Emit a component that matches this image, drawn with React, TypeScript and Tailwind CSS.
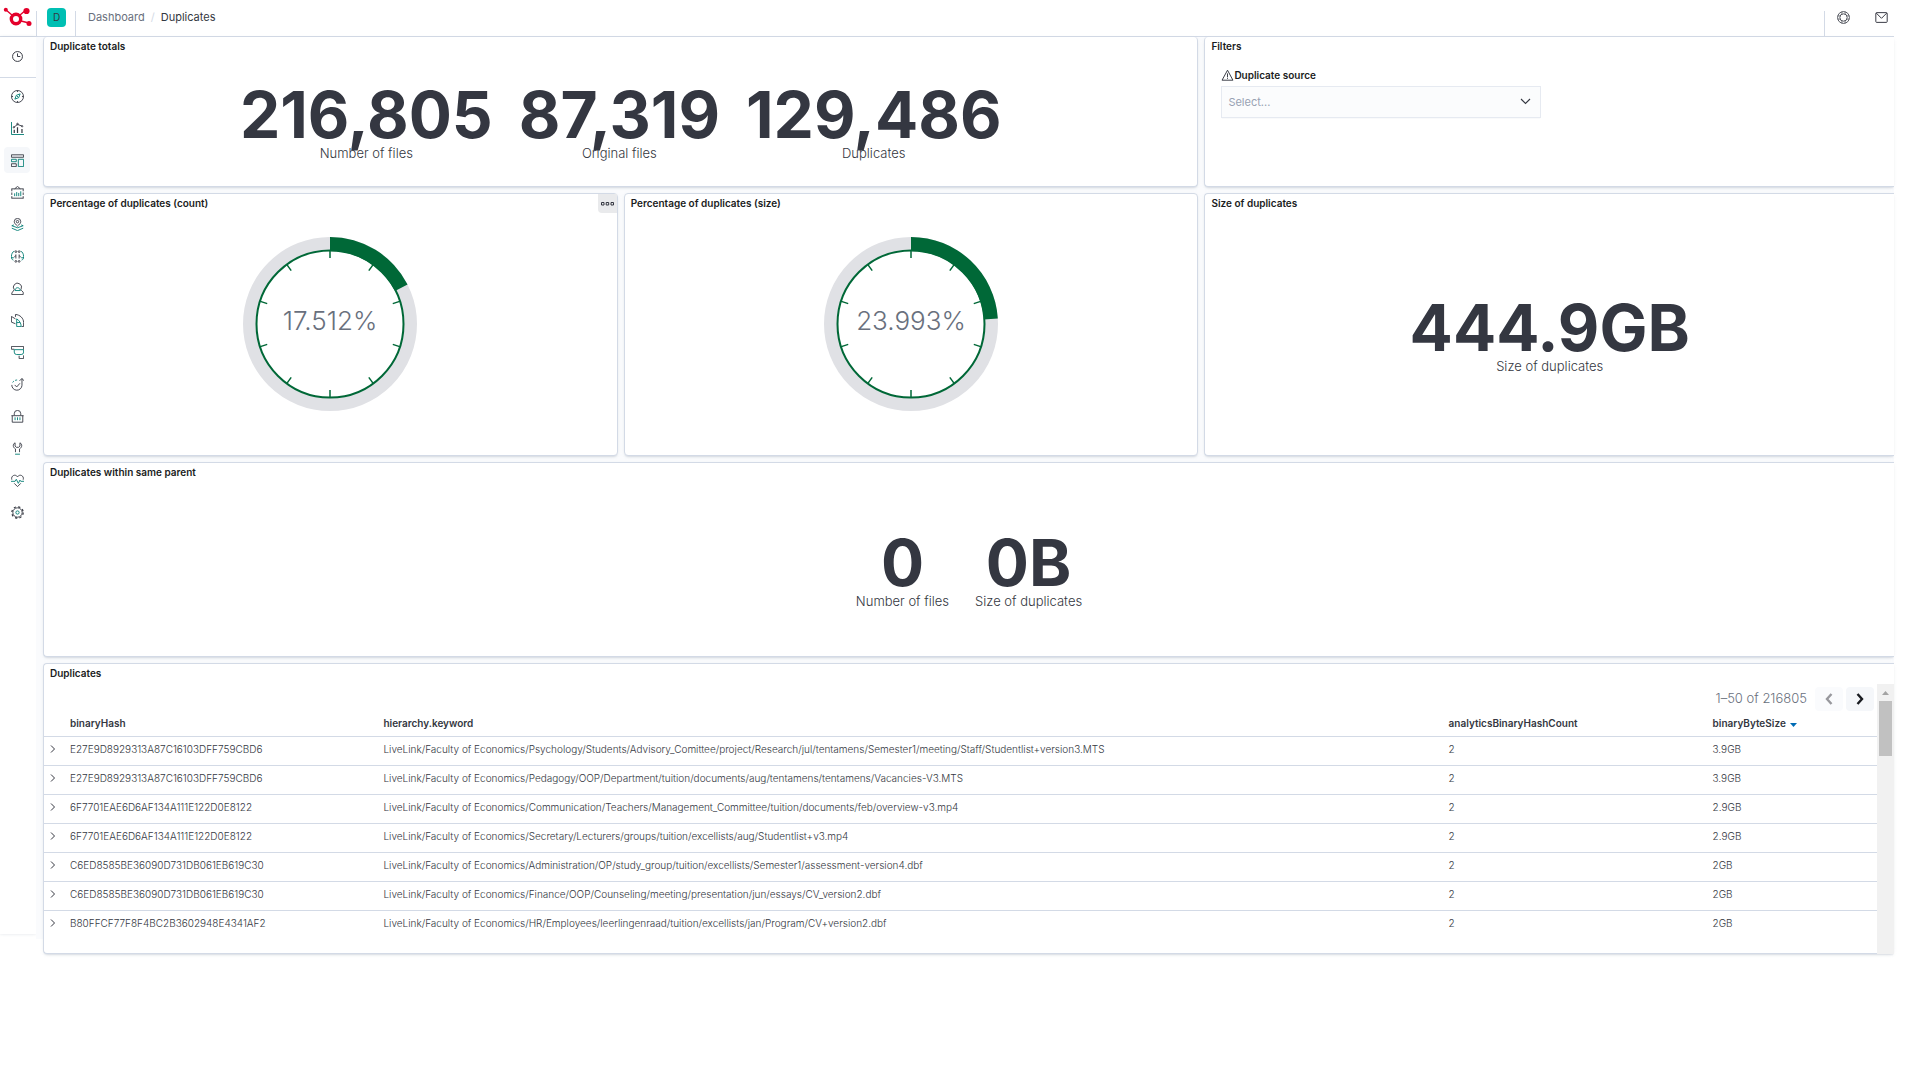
import { useState } from 'react';

const INK = '#343741';
const TEAL = '#017d73';

const navItems = [
  'Discover', 'Visualize', 'Dashboards', 'Canvas', 'Maps', 'Machine Learning', 'Infrastructure',
  'Logs', 'APM', 'Uptime', 'SIEM', 'Dev Tools', 'Stack Monitoring', 'Management',
];

const rows = [
  { hash: 'E27E9D8929313A87C16103DFF759CBD6', path: 'LiveLink/Faculty of Economics/Psychology/Students/Advisory_Comittee/project/Research/jul/tentamens/Semester1/meeting/Staff/Studentlist+version3.MTS', count: 2, size: '3.9GB' },
  { hash: 'E27E9D8929313A87C16103DFF759CBD6', path: 'LiveLink/Faculty of Economics/Pedagogy/OOP/Department/tuition/documents/aug/tentamens/tentamens/Vacancies-V3.MTS', count: 2, size: '3.9GB' },
  { hash: '6F7701EAE6D6AF134A111E122D0E8122', path: 'LiveLink/Faculty of Economics/Communication/Teachers/Management_Committee/tuition/documents/feb/overview-v3.mp4', count: 2, size: '2.9GB' },
  { hash: '6F7701EAE6D6AF134A111E122D0E8122', path: 'LiveLink/Faculty of Economics/Secretary/Lecturers/groups/tuition/excellists/aug/Studentlist+v3.mp4', count: 2, size: '2.9GB' },
  { hash: 'C6ED8585BE36090D731DB061EB619C30', path: 'LiveLink/Faculty of Economics/Administration/OP/study_group/tuition/excellists/Semester1/assessment-version4.dbf', count: 2, size: '2GB' },
  { hash: 'C6ED8585BE36090D731DB061EB619C30', path: 'LiveLink/Faculty of Economics/Finance/OOP/Counseling/meeting/presentation/jun/essays/CV_version2.dbf', count: 2, size: '2GB' },
  { hash: 'B80FFCF77F8F4BC2B3602948E4341AF2', path: 'LiveLink/Faculty of Economics/HR/Employees/leerlingenraad/tuition/excellists/jan/Program/CV+version2.dbf', count: 2, size: '2GB' },
];

const NavIcon = ({ name }: { name: string }) => (
  <svg width="13" height="13" viewBox="0 0 32 32" fill="none" stroke={INK} strokeWidth="2.2" aria-hidden="true">
    {name === 'Discover' && (
      <>
        <circle cx="16" cy="16" r="14.8" />
        <path d="M16 1v4M16 27v4M1 16h4M27 16h4" />
        <path d="M22.5 9.5l-3.6 9.4-9.4 3.6 3.6-9.4zM14 14l4 4" stroke={TEAL} />
      </>
    )}
    {name === 'Visualize' && (
      <>
        <path d="M1.2 0v30.8H32" stroke={TEAL} />
        <path d="M8 19v8M16 13v14M27 17v10" strokeWidth="3" />
        <path d="M7 13l9-7 11 4" />
        <circle cx="7" cy="13" r="1.6" />
        <circle cx="16" cy="5" r="2" />
        <circle cx="27.5" cy="10.5" r="1.6" />
      </>
    )}
    {name === 'Dashboards' && (
      <>
        <path d="M1 2h30v6H1zM1 24h12v7H1z" />
        <path d="M1 13h12v6H1zM18 13h13v18H18z" stroke={TEAL} />
      </>
    )}
    {name === 'Canvas' && (
      <>
        <path d="M9 7l7-6 7 6" />
        <path d="M1 7h30M1 30h30" />
        <path d="M2 7v23M30 7v23" strokeDasharray="6 3" />
        <path d="M9 18v7M14 15v10M19 17v8M24 13v12" stroke={TEAL} />
      </>
    )}
    {name === 'Maps' && (
      <>
        <path d="M16 20c-4-4-8-7-8-11a8 8 0 0116 0c0 4-4 7-8 11z" />
        <circle cx="16" cy="9" r="3" />
        <path d="M7 17l-5 2 14 5 14-5-5-2M2 25l14 6 14-6" stroke={TEAL} />
      </>
    )}
    {name === 'Machine Learning' && (
      <>
        <path d="M8 3C4 4 1 10 1 16s2 8 5 9M24 3c4 1 7 7 7 13s-2 8-5 9M1 19h6M25 19h6" stroke={TEAL} />
        <path d="M12 11v10M20 11v10M12 14l-4 3M20 14l4 3" />
        <circle cx="12" cy="4" r="2.2" />
        <circle cx="20" cy="4" r="2.2" />
        <circle cx="12" cy="28" r="2.2" />
        <circle cx="20" cy="28" r="2.2" />
      </>
    )}
    {name === 'Infrastructure' && (
      <>
        <path d="M8 19a10 10 0 1117-2c-1 2-1 3 1 4l4 4v6H2v-4z" />
        <path d="M10 21c1-5 3-7 6-7s6 2 7 7z" stroke={TEAL} />
      </>
    )}
    {name === 'Logs' && (
      <>
        <path d="M11 24L1 20V6l10 6M11 7V1c11 1 20 9 20 20v10h-5" />
        <path d="M14 12c7 4 11 11 11 19H14zM14 21h8" stroke={TEAL} />
      </>
    )}
    {name === 'APM' && (
      <>
        <path d="M8 8H1V1h30v8M20 24v7h11v-8" />
        <path d="M8 9h23v6a6 6 0 01-6 6H14a6 6 0 01-6-6z" stroke={TEAL} />
      </>
    )}
    {name === 'Uptime' && (
      <>
        <path d="M4 11a13 13 0 0112-6" stroke={TEAL} strokeDasharray="5 3" />
        <path d="M2 17a12.500 12.500 0 0025 1V2M21 7l6-6 5 6" />
        <path d="M9 17l5 5 8-9" />
      </>
    )}
    {name === 'SIEM' && (
      <>
        <path d="M8 13V9a8 8 0 0116 0v4M1 14h30M3 14v16h26V14" />
        <path d="M10 18v7M16 18v7M22 18v7" stroke={TEAL} />
      </>
    )}
    {name === 'Dev Tools' && (
      <>
        <path d="M11 25V17C4 13 4 5 10 2v8l3 3h6l3-3V2c6 3 6 11-1 15v8" />
        <path d="M10 30h12" stroke={TEAL} />
      </>
    )}
    {name === 'Stack Monitoring' && (
      <>
        <path d="M2 14C-1 4 11-1 16 7c5-8 17-3 14 7M8 23l8 8 8-8" />
        <path d="M0 18h10l3-5 5 10 4-8 2 3h8" stroke={TEAL} />
      </>
    )}
    {name === 'Management' && (
      <>
        <circle cx="16" cy="16" r="11.500" />
        <circle cx="16" cy="16" r="14" strokeWidth="3" strokeDasharray="5.5 5.500" />
        <circle cx="16" cy="16" r="4" stroke={TEAL} />
      </>
    )}
  </svg>
);

const Logo = () => (
  <svg width="30" height="20" viewBox="0 0 30 20" fill="none" stroke="#e4002b" aria-hidden="true">
    <path d="M2.500 2.500l7 6M17 8l6-5M18 14l8 2" strokeWidth="1.400" />
    <circle cx="13" cy="12" r="4.700" strokeWidth="3.400" />
    <g fill="#e4002b" stroke="none">
      <circle cx="2.800" cy="2.700" r="2" />
      <circle cx="23.500" cy="4" r="3.100" />
      <circle cx="26" cy="16.500" r="2.500" />
    </g>
  </svg>
);

const Panel = ({
  title,
  className = '',
  children,
  menu = false,
}: {
  title: string;
  className?: string;
  children: React.ReactNode;
  menu?: boolean;
}) => (
  <section
    className={`flex flex-col min-w-0 bg-white border border-[#d3dae6] rounded shadow-[0_2px_2px_-1px_rgba(152,162,179,0.3),0_1px_5px_-2px_rgba(152,162,179,0.3)] ${className}`}
  >
    <div className="flex justify-between h-5">
      <h2 className="px-1.5 text-[10px] leading-[18px] font-semibold text-[#1a1c21]">{title}</h2>
      {menu && (
        <button type="button" aria-label="Panel options" className="w-[19px] h-[19px] flex items-center justify-center bg-[#e9eaec] rounded-bl">
          <svg width="13" height="4" viewBox="0 0 13 4" fill="none" stroke={INK} aria-hidden="true">
            <path d="M.5.5h2.500v2.500H.5zM5.200.5h2.500v2.500H5.200zM10 .5h2.500v2.500H10z" />
          </svg>
        </button>
      )}
    </div>
    {children}
  </section>
);

const Metrics = ({ items }: { items: { value: string; label: string }[] }) => (
  <div className="flex-1 flex items-center justify-center">
    {items.map(item => (
      <div key={item.label} className="px-[13px] pb-0.5 text-center">
        <div className="text-[64px] leading-[64px] font-bold text-[#343741]">{item.value}</div>
        <div className="text-[13px] leading-3 font-light text-[#343741]">{item.label}</div>
      </div>
    ))}
  </div>
);

const Gauge = ({ percent }: { percent: number }) => {
  const angle = (percent / 100) * 2 * Math.PI;
  const at = (r: number) => `${88 + r * Math.sin(angle)} ${88 - r * Math.cos(angle)}`;
  return (
    <div className="flex-1 flex items-center justify-center pb-[22px]">
      <svg width="176" height="176" viewBox="0 0 176 176" fill="none" role="img" aria-label={`${percent}%`}>
        <circle cx="88" cy="88" r="80.500" stroke="#e0e1e5" strokeWidth="13" />
        <circle cx="88" cy="88" r="73.500" stroke="#006837" strokeWidth="2" />
        {Array.from({ length: 10 }, (_, i) => (
          <path key={i} d="M88 14v8" stroke="#006837" strokeWidth="1.500" transform={`rotate(${i * 36} 88 88)`} />
        ))}
        <path d={`M88 1A87 87 0 0 1 ${at(87)}L${at(73)}A73 73 0 0 0 88 15Z`} fill="#006837" />
        <text x="88" y="94" textAnchor="middle" fill="#69707d" className="text-[26px] font-light">
          {percent}%
        </text>
      </svg>
    </div>
  );
};

const App = () => {
  const [source, setSource] = useState('');

  return (
    <div className="min-h-screen bg-white pr-[26px] font-['Inter',sans-serif] text-[#343741]">
      <header className="flex items-stretch h-[37px] border-b border-[#d3dae6]">
        <a href="#home" aria-label="Home" className="w-9 shrink-0 pl-[3px] pt-[7px]">
          <Logo />
        </a>
        <div className="w-10 mt-[11px] border-x border-[#d3dae6]">
          <button type="button" aria-label="Default space" className="-mt-[3px] ml-2.5 w-[19px] h-[19px] block rounded-sm bg-[#00bfb3] text-[10px] leading-[19px] text-center">
            D
          </button>
        </div>
        <nav aria-label="Breadcrumb" className="flex flex-1 items-center pl-3 pb-px text-[11px]">
          <a href="#dashboard" className="text-[#69707d]">Dashboard</a>
          <span className="px-1.5 text-[#d3dae6]">/</span>
          <span className="text-[#343741]">Duplicates</span>
        </nav>
        <div className="flex mt-[11px] border-l border-[#d3dae6] pl-3 pr-1.5 gap-[25px]">
          <button type="button" aria-label="Help" className="h-[13px]">
            <svg width="13" height="13" viewBox="0 0 16 16" fill="none" stroke={INK} aria-hidden="true">
              <circle cx="8" cy="8" r="7.300" />
              <circle cx="8" cy="8" r="4.500" />
              <path d="M6 1v3M10 1v3M6 12v3M10 12v3M1 6h3M1 10h3M12 6h3M12 10h3" strokeWidth=".8" />
            </svg>
          </button>
          <button type="button" aria-label="News" className="h-[13px]">
            <svg width="13" height="13" viewBox="0 0 16 16" fill="none" stroke={INK} strokeWidth="1.200" aria-hidden="true">
              <rect x="1" y="2" width="14" height="12" rx="1" />
              <path d="M1.500 2.500L8 9l6.500-6.500" />
            </svg>
          </button>
        </div>
      </header>

      <div className="flex items-start">
        <aside className="w-9 shrink-0 min-h-[897px] bg-white shadow-[0_0_3px_rgba(152,162,179,0.3)]">
          <div className="h-[41px] flex items-center justify-center pr-0.5 pb-px border-b border-[#d3dae6]">
            <button type="button" aria-label="Recently viewed">
              <svg width="11" height="11" viewBox="0 0 16 16" fill="none" stroke={INK} strokeWidth="1.400" className="block" aria-hidden="true">
                <circle cx="8" cy="8" r="7.200" />
                <path d="M8 3.500V8h4" />
              </svg>
            </button>
          </div>
          <nav aria-label="Main" className="flex flex-col gap-1.5 pt-[5px] pl-1">
            {navItems.map(name => (
              <a
                key={name}
                href="#app"
                aria-label={name}
                className={`w-[26px] h-[26px] flex items-center justify-center rounded ${name === 'Dashboards' ? 'bg-[#f5f7fa]' : ''}`}
              >
                <NavIcon name={name} />
              </a>
            ))}
          </nav>
        </aside>

        <main className="flex-1 min-w-0 pl-[7px] bg-[#fafbfd] grid grid-cols-[5fr_5fr_6fr] gap-1.5">
          <Panel title="Duplicate totals" className="col-span-2 min-h-[150px] border-t-0">
            <Metrics
              items={[
                { value: '216,805', label: 'Number of files' },
                { value: '87,319', label: 'Original files' },
                { value: '129,486', label: 'Duplicates' },
              ]}
            />
          </Panel>
          <Panel title="Filters" className="border-t-0 border-r-0 rounded-r-none">
            <div className="pl-4 pt-3">
              <label htmlFor="source" className="flex items-center text-[10px] leading-3 font-semibold text-[#1a1c21]">
                <svg width="13" height="12" viewBox="0 0 16 15" fill="none" stroke={INK} strokeWidth="1.200" aria-hidden="true">
                  <path d="M8 1.500L14.800 14H1.200zM8 5.500v5M8 11.500v1" />
                </svg>
                Duplicate source
              </label>
              <div className="relative mt-[5px] w-80">
                <select
                  id="source"
                  value={source}
                  onChange={e => setSource(e.target.value)}
                  className="appearance-none block w-full h-8 pl-1.5 border border-[#e6eaf1] bg-[#fbfcfd] text-[11px] text-[#98a2b3] shadow-[0_1px_1px_-1px_rgba(152,162,179,0.3)]"
                >
                  <option value="">Select...</option>
                </select>
                <svg width="11" height="7" viewBox="0 0 11 7" fill="none" stroke={INK} strokeWidth="1.100" className="absolute right-2.5 top-3 pointer-events-none" aria-hidden="true">
                  <path d="M1 1l4.500 4.500L10 1" />
                </svg>
              </div>
            </div>
          </Panel>

          <Panel title="Percentage of duplicates (count)" menu className="min-h-[263px]">
            <Gauge percent={17.512} />
          </Panel>
          <Panel title="Percentage of duplicates (size)">
            <Gauge percent={23.993} />
          </Panel>
          <Panel title="Size of duplicates" className="border-r-0 rounded-r-none">
            <Metrics items={[{ value: '444.9GB', label: 'Size of duplicates' }]} />
          </Panel>

          <Panel title="Duplicates within same parent" className="col-span-3 min-h-[195px] border-r-0 rounded-r-none">
            <Metrics
              items={[
                { value: '0', label: 'Number of files' },
                { value: '0B', label: 'Size of duplicates' },
              ]}
            />
          </Panel>

          <Panel title="Duplicates" className="col-span-3 min-h-[291px] -mb-[15px] border-r-0 rounded-r-none">
            <div className="flex-1 flex">
              <div className="flex-1 min-w-0">
                <div className="flex items-center justify-end gap-[3px] pt-[3px] pr-[3px] text-[13px] font-light text-[#69707d]">
                  <span className="pr-[5px]">1–50 of 216805</span>
                  <button type="button" disabled aria-label="Previous page" className="w-7 h-6 flex items-center justify-center rounded-sm bg-[#fafbfd]">
                    <svg width="8" height="12" viewBox="0 0 8 12" fill="none" stroke="#98989d" strokeWidth="2.400" aria-hidden="true">
                      <path d="M6.500 1L2 6l4.500 5" />
                    </svg>
                  </button>
                  <button type="button" aria-label="Next page" className="w-7 h-6 flex items-center justify-center rounded-sm bg-[#f5f7fa]">
                    <svg width="8" height="12" viewBox="0 0 8 12" fill="none" stroke="#1a1c21" strokeWidth="2.400" aria-hidden="true">
                      <path d="M1.500 1L6 6l-4.500 5" />
                    </svg>
                  </button>
                </div>
                <table className="w-full table-fixed text-left text-[10px] leading-3">
                  <thead>
                    <tr className="h-[25px] border-b border-[#d3dae6] [&>th]:px-1.5 [&>th]:font-semibold">
                      <th className="w-5" />
                      <th className="w-[17.1%]">binaryHash</th>
                      <th>hierarchy.keyword</th>
                      <th className="w-[14.4%]">analyticsBinaryHashCount</th>
                      <th className="w-[9.3%]">
                        <button type="button" className="flex items-center gap-1">
                          binaryByteSize
                          <svg width="7" height="4" viewBox="0 0 7 4" className="mt-1" aria-hidden="true">
                            <path d="M0 0h7L3.500 4z" fill="#006bb4" />
                          </svg>
                        </button>
                      </th>
                    </tr>
                  </thead>
                  <tbody>
                    {rows.map(row => (
                      <tr key={row.path} className="h-[29px] border-b border-[#d3dae6] last:border-b-0 font-light [&>td]:px-1.5 [&>td]:pb-1">
                        <td>
                          <button type="button" aria-label="Toggle row details" className="block">
                            <svg width="6" height="8" viewBox="0 0 6 8" fill="none" stroke={INK} aria-hidden="true">
                              <path d="M1 .5L4.500 4 1 7.500" />
                            </svg>
                          </button>
                        </td>
                        <td>{row.hash}</td>
                        <td>{row.path}</td>
                        <td>{row.count}</td>
                        <td>{row.size}</td>
                      </tr>
                    ))}
                  </tbody>
                </table>
              </div>
              <div className="w-[17px] bg-[#f1f1f1] flex flex-col items-center -mb-px">
                <svg width="17" height="17" viewBox="0 0 17 17" aria-hidden="true">
                  <path d="M5 11h7L8.500 7z" fill="#a3a3a3" />
                </svg>
                <div className="w-[13px] h-[55px] bg-[#c1c1c1]" />
              </div>
            </div>
          </Panel>
        </main>
      </div>
    </div>
  );
};

export default App;
